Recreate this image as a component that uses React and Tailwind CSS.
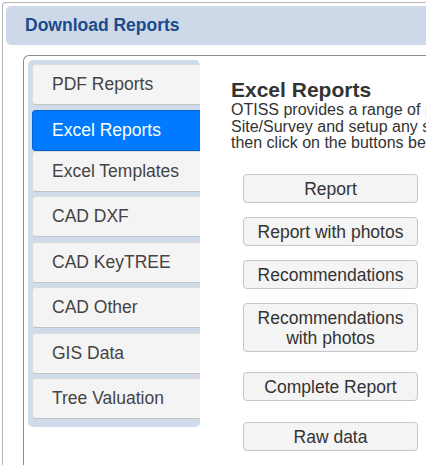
const TABS = [
  'PDF Reports',
  'Excel Reports',
  'Excel Templates',
  'CAD DXF',
  'CAD KeyTREE',
  'CAD Other',
  'GIS Data',
  'Tree Valuation',
]

const BUTTONS = [
  { label: 'Report', mb: 'mb-[14px]' },
  { label: 'Report with photos', mb: 'mb-[14px]' },
  { label: 'Recommendations', mb: 'mb-[14px]' },
  { label: ['Recommendations', 'with photos'], mb: 'mb-[20px]' },
  { label: 'Complete Report', mb: 'mb-[21px]' },
  { label: 'Raw data', mb: '' },
]

export default function App() {
  const active = 'Excel Reports'

  return (
    <div className="w-[426px] h-[465px] overflow-hidden bg-white font-['Liberation_Sans',Arial,sans-serif]">
      <div className="mt-[2px] ml-[2px] h-[480px] w-[440px] border-l border-t border-[#b4b4b4] rounded-tl-[4px] bg-white pt-[3px] pl-[3px]">
        {/* dialog title */}
        <div className="h-[39px] rounded-[5px] bg-[#cdd9e8] pl-[19px] flex items-center text-[17.5px] font-bold text-[#1b4a8d]">
          Download Reports
        </div>

        <div className="mt-[10px] ml-[17px] h-[440px] border-l border-t border-[#8c8c8c] rounded-tl-[6px] pt-[4px] pl-[4px] flex">
          {/* tab list */}
          <div className="w-[172px] self-start shrink-0 bg-[#cfdbe9] rounded-[5px] pt-[4px] pl-[4px] pb-[8px] flex flex-col">
            {TABS.map((t, i) => {
              const on = t === active
              const last = i === TABS.length - 1
              return (
                <div
                  key={t}
                  className={`h-[41px] shrink-0 flex items-center pl-[19px] text-[17.5px] rounded-l-[4px] border-l border-t border-b ${
                    on
                      ? 'bg-[#007bff] text-white border-[#0a64d6]'
                      : 'bg-[#f4f4f4] text-[#444] border-t-[#dcdcdc] border-l-[#dcdcdc] border-b-[#c4c4c4]'
                  } ${on || last ? 'mb-0' : 'mb-[4.5px]'}`}
                >
                  {t}
                </div>
              )
            })}
          </div>

          {/* content */}
          <div className="pl-[31px] pt-[18px] whitespace-nowrap text-[#333]">
            <h2 className="text-[21px] font-bold leading-[24px]">Excel Reports</h2>
            <p className="text-[16px] leading-[16.6px]">
              OTISS provides a range of pre-formatted Excel reports. Select a
              <br />
              Site/Survey and setup any sort or filter options required,
              <br />
              then click on the buttons below to download the report.
            </p>

            <div className="mt-[22.5px] ml-[12px] flex flex-col w-[175px]">
              {BUTTONS.map((b, i) => (
                <button
                  key={i}
                  className={`w-[175px] border border-[#c6c6c6] bg-[#f4f4f4] rounded-[4px] py-[3.5px] text-[17.5px] leading-[20px] text-[#333] text-center ${b.mb}`}
                >
                  {Array.isArray(b.label) ? (
                    <>
                      {b.label[0]}
                      <br />
                      {b.label[1]}
                    </>
                  ) : (
                    b.label
                  )}
                </button>
              ))}
            </div>
          </div>
        </div>
      </div>
    </div>
  )
}
